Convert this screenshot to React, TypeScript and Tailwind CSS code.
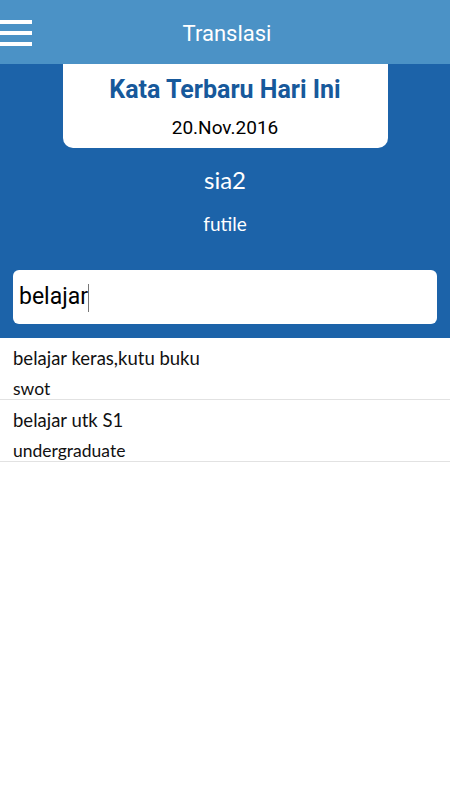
import React from "react";

export default function App() {
  const items = [
    { a: "belajar keras,kutu buku", b: "swot" },
    { a: "belajar utk S1", b: "undergraduate" },
  ];
  return (
    <div className="w-[450px] h-[800px] bg-white flex flex-col" style={{ fontFamily: "Roboto, sans-serif" }}>
      <div className="h-[64px] bg-[#4b92c6] flex items-center relative">
        <div className="absolute left-0 top-[20px] flex flex-col gap-[7px]">
          <div className="w-[32px] h-[4px] bg-white" />
          <div className="w-[32px] h-[4px] bg-white" />
          <div className="w-[32px] h-[4px] bg-white" />
        </div>
        <div className="flex-1 text-center text-white text-[22px] pt-[2px] pl-[4px]">Translasi</div>
      </div>
      <div className="bg-[#1c63a9] h-[274px] flex flex-col items-center">
        <div className="w-[325px] h-[84px] bg-white rounded-b-[10px] flex flex-col items-center">
          <div className="text-[#17599b] font-bold text-[25px] leading-none mt-[13px]">Kata Terbaru Hari Ini</div>
          <div className="text-black text-[19px] leading-none mt-[16px]">20.Nov.2016</div>
        </div>
        <div className="text-white text-[24px] leading-none mt-[20px]" style={{ fontFamily: "Lato, sans-serif" }}>sia2</div>
        <div className="text-white text-[19px] leading-none mt-[22px]" style={{ fontFamily: "Lato, sans-serif" }}>futile</div>
        <div className="w-[424px] h-[54px] bg-white rounded-[6px] mt-[37px] flex items-center px-[6px]">
          <span className="text-black text-[23px]">belajar</span>
          <span className="w-[1px] h-[28px] bg-[#777] mt-[2px]" />
        </div>
      </div>
      <div className="flex flex-col" style={{ fontFamily: "Lato, sans-serif" }}>
        {items.map((it) => (
          <div key={it.a} className="h-[62px] border-b border-[#e2e2e2] px-[13px] pt-[11px] flex flex-col">
            <div className="text-[18.5px] text-[#111] leading-none">{it.a}</div>
            <div className="text-[17.5px] text-[#111] leading-none mt-[12px]">{it.b}</div>
          </div>
        ))}
      </div>
    </div>
  );
}
